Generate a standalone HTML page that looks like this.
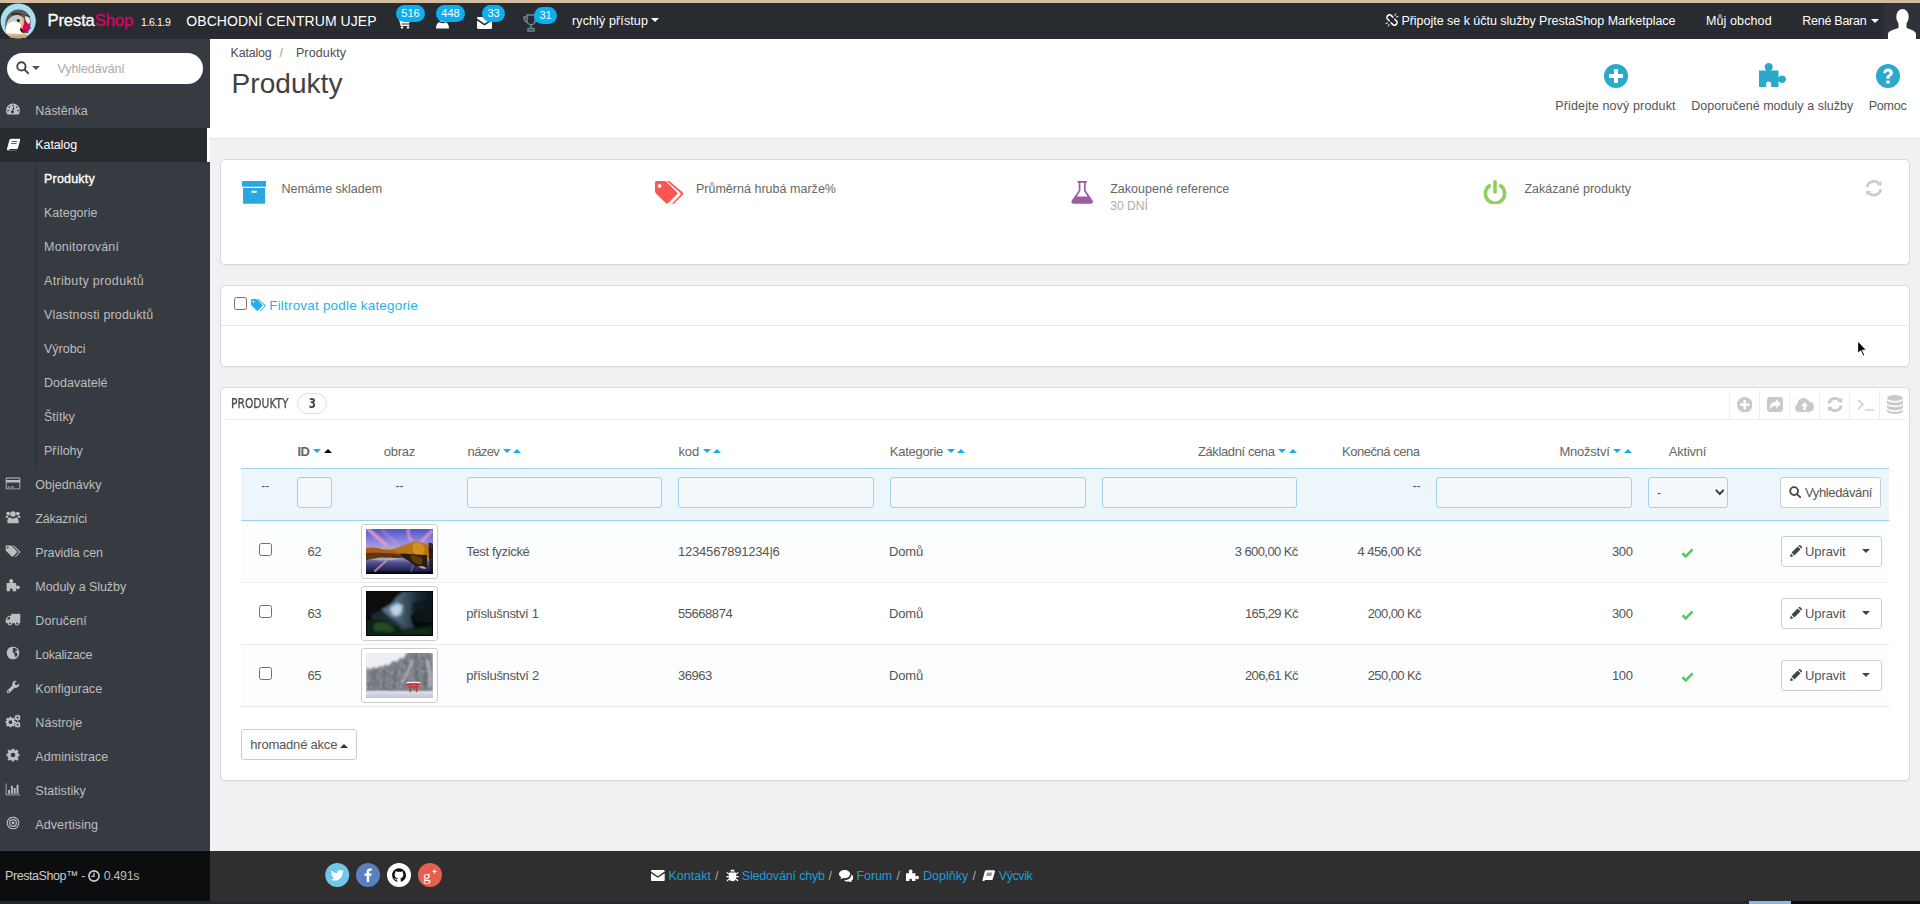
<!DOCTYPE html>
<html lang="cs">
<head>
<meta charset="utf-8">
<title>Produkty • OBCHODNÍ CENTRUM UJEP</title>
<style>
*{box-sizing:border-box;margin:0;padding:0}
html,body{width:1920px;height:904px;overflow:hidden}
body{position:relative;background:#eff1f2;font-family:"Liberation Sans",sans-serif;font-size:12px;color:#555;line-height:1.42857}
a{text-decoration:none;color:inherit}
.abs{position:absolute}
.t{position:absolute;white-space:nowrap;line-height:1}
svg{display:block}
/* chrome strips */
#topstrip{left:0;top:0;width:1920px;height:3px;background:#d3bca0}
#botstrip{left:0;top:901px;width:1920px;height:3px;background:#23262d}
/* header */
#header{left:0;top:3px;width:1920px;height:36px;background:#282b30;color:#fff}
/* sidebar */
#sidebar{left:0;top:39px;width:210px;height:812px;background:#363a41;color:#bebebe}
#sidefoot{left:0;top:851px;width:210px;height:50px;background:#0c0d0e;color:#ccc}
/* page head */
#pagehead{left:210px;top:39px;width:1710px;height:100px;background:#fff;border-bottom:1px solid #e1e3e4}
/* footer */
#footer{left:210px;top:851px;width:1710px;height:50px;background:#2f2f2f;color:#bbb}
.panel{position:absolute;background:#fff;border:1px solid #d6dadd;border-radius:5px;box-shadow:0 1px 0 rgba(0,0,0,.035)}
.badge{height:17px;border-radius:9px;background:#0cb0f0;color:#fff;font-size:11px;line-height:17px;text-align:center}
.caret{width:0;height:0;border-left:4px solid transparent;border-right:4px solid transparent;border-top:4px solid #555}
.mi{position:absolute;left:0;width:210px;height:34px}
.mi.act{width:207px;background:#282b30;color:#fff;box-shadow:3px 0 0 #fff}
.mi .ic{position:absolute;left:5px;top:0;width:16px;height:32px;transform:scale(.94);display:flex;align-items:center;justify-content:center}
.mi .ml{left:35.3px;top:12px;font-size:12.5px}
.mi.act .ml{top:11.4px}
.si{left:44px;font-size:12.5px}
.si.cur{color:#fff;-webkit-text-stroke:.35px #fff}
.cond{font-family:"DejaVu Sans Condensed","Liberation Sans",sans-serif}
.inp{background:#f5f8fa;border:1px solid #a0d0eb;border-radius:3px}
.btn{background:#fff;border:1px solid #cdcdcd;border-radius:3px}
.cb{width:13.200px;height:13px;border:1.500px solid #6f6f6f;border-radius:2.500px;background:#fff}
.thumb{width:77px;height:55px;border:1px solid #ccc;border-radius:3px;background:#fff;padding:4px}
.rt{text-align:right}
</style>
</head>
<body>
<div id="topstrip" class="abs"></div>

<!-- HEADER -->
<div id="header" class="abs">
  <!-- logo -->
  <svg class="abs" style="left:0;top:0" width="38" height="36" viewBox="0 0 38 36">
    <circle cx="18.2" cy="18" r="17.6" fill="#a9deee"/>
    <path d="M5.5 26 C3.5 12 12 6.5 18.5 6.5 C26 6.5 31.5 12 30.5 22 L28 30 L8 30 Z" fill="#5a5853"/>
    <path d="M6 27 C5.5 18 10 12.5 17 12 C21 12 23 14 23.5 17 L22 30 L9 31 Z" fill="#c9c9c7"/>
    <path d="M25 13.5 C28.5 12.5 30.5 16 30 20 L26 22 Z" fill="#e9e7e2"/>
    <path d="M6 30 C5 22 9 18.5 14 18.5 C18 18.5 21 20 21.5 24 L22 31 Z" fill="#fff"/>
    <path d="M11.5 11.5 C14 10.2 18 10.3 21 12" stroke="#2b2a27" stroke-width="1.6" fill="none"/>
    <path d="M26.5 12.6 C28 12.4 29 13 29.6 14" stroke="#2b2a27" stroke-width="1.2" fill="none"/>
    <circle cx="18.3" cy="17.6" r="1.5" fill="#222"/>
    <path d="M22.2 14.5 C23.8 17 23 21 20 25 L21.5 26 C24.6 22 25 17.5 23.8 14.8 Z" fill="#f6b700"/>
    <path d="M20 25 C19.6 27 20.4 28.5 22.5 29.6 L23.2 26.5 Z" fill="#1d1d1b"/>
    <path d="M24.2 15.5 L31.2 25.2 L23.6 29.8 L22 26.3 C24.2 23 24.8 19 24.2 15.5 Z" fill="#df0067"/>
    <path d="M22.6 27.2 L29 26.4 L23.6 29.8 Z" fill="#b5054f"/>
    <path d="M9 31 L27 31 L25.5 35 L11 35 Z" fill="#d9bd8a"/>
    <path d="M10 32.6 L26.3 32.6 L25.5 35 L11 35 Z" fill="#c9a76c"/>
  </svg>
  <span class="t" id="h-presta" style="left:47.5px;top:10.4px;font-size:16.6px;-webkit-text-stroke:.3px currentColor;color:#fff;letter-spacing:-0.123px">Presta<span style="color:#df0067">Shop</span></span>
  <span class="t" id="h-ver" style="left:141.0px;top:14.1px;font-size:10.5px;color:#fff;letter-spacing:-0.359px">1.6.1.9</span>
  <span class="t" id="h-shop" style="left:186.3px;top:11.1px;font-size:14px;color:#fff;letter-spacing:0.061px">OBCHODNÍ CENTRUM UJEP</span>

  <!-- notification icons -->
  <svg class="abs" style="left:397px;top:12px" width="14" height="14" viewBox="0 0 14 14" fill="#fff"><path d="M0 1h2.6l.5 2H13.6l-1.4 5.4H4.4l.3 1.2h7.6v1.4H3.6L1.6 2.4H0z"/><circle cx="5" cy="12.4" r="1.2"/><circle cx="11" cy="12.4" r="1.2"/></svg>
  <span class="abs badge" style="left:396px;top:2px;width:29px">516</span>
  <svg class="abs" style="left:436px;top:12px" width="13" height="14" viewBox="0 0 13 14" fill="#fff"><circle cx="6.5" cy="3.6" r="3.4"/><path d="M0 13.5c0-4 1.6-6 3.6-6.3.8.7 1.8 1 2.9 1s2.100-.3 2.900-1c2 .3 3.600 2.300 3.600 6.300z"/></svg>
  <span class="abs badge" style="left:436px;top:2px;width:29px">448</span>
  <svg class="abs" style="left:476.500px;top:13.500px" width="15" height="12" viewBox="0 0 15 12" fill="#fff"><path d="M0 1.200C0 .5.500 0 1.200 0h12.600c.7 0 1.200.5 1.200 1.200v.4L7.500 6.800 0 1.600z"/><path d="M0 3.400l7.500 5.100L15 3.400v7.400c0 .7-.5 1.200-1.200 1.200H1.200C.5 12 0 11.500 0 10.800z"/></svg>
  <span class="abs badge" style="left:482px;top:2px;width:23px">33</span>
  <svg class="abs" style="left:522.500px;top:11px" width="16" height="18" viewBox="0 0 16 18" fill="none" stroke="#6c8791" stroke-width="1.500"><path d="M4 1h8v5.500c0 2.500-1.800 4.300-4 4.300S4 9 4 6.500z"/><path d="M4 3H1c0 3 1.500 4.800 3.600 5.200M12 3h3c0 3-1.500 4.800-3.600 5.200"/><path d="M8 10.800v3.400M5 17h6v-2.600H5z"/></svg>
  <span class="abs badge" style="left:534px;top:3.700px;width:23px">31</span>
  <span class="t" id="h-quick" style="left:572.0px;top:12.4px;font-size:12.5px;color:#fff;letter-spacing:0.119px">rychlý přístup</span>
  <span class="abs caret" style="left:651px;top:15px;border-top-color:#fff"></span>

  <!-- right side -->
  <svg class="abs" style="left:1385px;top:9.600px;transform:scaleX(-1)" width="14" height="14" viewBox="0 0 14 14" fill="none" stroke="#fff" stroke-width="1.500" stroke-linecap="round"><path d="M6 4.200l1.600-1.600a2.600 2.600 0 0 1 3.700 3.700L9.800 7.800"/><path d="M8 9.800l-1.600 1.600a2.600 2.600 0 0 1-3.700-3.700L4.200 6.200"/><path d="M1 3.500l1.500.5M3.500 1l.5 1.500M13 10.500l-1.500-.5M10.500 13l-.5-1.500" stroke-width="1"/></svg>
  <span class="t" id="h-market" style="left:1401.4px;top:12.4px;font-size:12.5px;color:#fff;letter-spacing:-0.022px">Připojte se k účtu služby PrestaShop Marketplace</span>
  <span class="t" id="h-myshop" style="left:1706.0px;top:12.4px;font-size:12.5px;color:#fff;letter-spacing:0.107px">Můj obchod</span>
  <span class="t" id="h-user" style="left:1802.3px;top:12.4px;font-size:12.5px;color:#fff;letter-spacing:-0.262px">René Baran</span>
  <span class="abs caret" style="left:1871px;top:16px;border-top-color:#fff"></span>
  <div class="abs" style="left:1884px;top:0;width:36px;height:36px;background:#2f3238;overflow:hidden">
    <svg width="36" height="36" viewBox="0 0 36 36" fill="#fff"><ellipse cx="18.500" cy="14" rx="6.200" ry="8"/><path d="M14.500 19h8v6c4 1.500 9 2.500 9.500 6v6h-28v-6c.5-3.500 6.500-4.500 10.500-6z"/></svg>
  </div>
</div>

<!-- SIDEBAR -->
<div id="sidebar" class="abs">
  <div class="abs" id="sb-search" style="left:7px;top:13.5px;width:196px;height:31.5px;border-radius:16px;background:#fff">
    <svg class="abs" style="left:8.5px;top:8.8px" width="13.5" height="13.5" viewBox="0 0 14 14" fill="none" stroke="#444" stroke-width="2"><circle cx="5.600" cy="5.600" r="4.300"/><path d="M8.800 8.800l4 4" stroke-linecap="round"/></svg>
    <span class="abs caret" style="left:25px;top:13.5px;border-top-color:#555"></span>
    <span class="t" id="sb-ph" style="left:50.5px;top:10.4px;font-size:12.5px;color:#aaa;letter-spacing:-0.104px">Vyhledávání</span>
  </div>
  <div class="mi" style="top:54px"><span class="ic"><svg width="16" height="14" viewBox="0 0 16 14"><path fill="currentColor" fill-rule="evenodd" d="M8 1.200a7.300 7.300 0 0 1 7.300 7.300c0 1.500-.4 2.800-1.100 3.900-.15.250-.4.400-.7.400H2.500c-.3 0-.55-.15-.7-.4A7.300 7.300 0 0 1 8 1.200zM8 2.400a.9.900 0 1 0 0 1.800.9.900 0 0 0 0-1.800zM4.100 4a.9.900 0 1 0 0 1.800.9.900 0 0 0 0-1.800zM11.900 4a.9.900 0 1 0 0 1.800.9.900 0 0 0 0-1.800zM2.700 7.700a.9.900 0 1 0 0 1.800.9.900 0 0 0 0-1.800zM13.300 7.700a.9.900 0 1 0 0 1.800.9.900 0 0 0 0-1.800zM9.300 5.300l-.9 3.500a1.600 1.600 0 1 1-1.100-.3l.9-3.500z"/></svg></span><a class="t ml" id="m0" style="letter-spacing:-0.052px">Nástěnka</a></div>
  <div class="mi act" style="top:88.5px"><span class="ic"><svg width="15" height="13" viewBox="0 0 15 13"><path fill="currentColor" fill-rule="evenodd" d="M4.800.3h9c.7 0 1.100.6.900 1.300l-2.400 8.600c-.2.700-.8 1.200-1.500 1.200H3.200l-.3 1h8.400l-.3.500H1.700c-.8 0-1.300-.7-1.100-1.500L3 2.200C3.300 1.100 4 .3 4.800.3zM5.600 3l-.25.900h6l.25-.9zM5 5.200l-.25.900h6l.25-.9z"/></svg></span><a class="t ml" id="m1" style="letter-spacing:-0.101px">Katalog</a></div>
  <div class="mi" style="top:428px"><span class="ic"><svg width="16" height="13" viewBox="0 0 16 13"><path fill="currentColor" fill-rule="evenodd" d="M1.300 0h13.400c.7 0 1.300.6 1.300 1.300v10.400c0 .7-.6 1.300-1.300 1.300H1.300C.6 13 0 12.400 0 11.700V1.300C0 .6.600 0 1.300 0zM1.200 1.200v1.600h13.600V1.200zM1.200 5.600v6.200h13.600V5.600zM2.400 9.600h2.200v1.100H2.400zM5.600 9.600h3.300v1.100H5.600z"/></svg></span><a class="t ml" id="m2" style="letter-spacing:0.028px">Objednávky</a></div>
  <div class="mi" style="top:462px"><span class="ic"><svg width="16" height="14" viewBox="0 0 16 14" fill="currentColor"><circle cx="8" cy="3.800" r="2.900"/><circle cx="2.900" cy="3.300" r="2"/><circle cx="13.100" cy="3.300" r="2"/><path d="M3.500 14c-1 0-1.500-.6-1.500-1.500 0-2.800.7-5.200 2.700-5.300.9.800 2 1.300 3.300 1.300s2.400-.5 3.300-1.300c2 .1 2.700 2.500 2.700 5.300 0 .9-.5 1.500-1.500 1.500z"/><path d="M0 7.200C0 6 .5 5.400 1.500 5.600c.5.300 1.200.4 1.900.3-.6.500-1.100 1.300-1.400 2.200H.9C.3 8.100 0 7.800 0 7.200zM16 7.200c0-1.200-.5-1.800-1.500-1.600-.5.300-1.200.4-1.900.3.600.5 1.100 1.300 1.400 2.200h1.100c.6 0 .9-.3.900-.9z"/></svg></span><a class="t ml" id="m3" style="letter-spacing:-0.211px">Zákazníci</a></div>
  <div class="mi" style="top:496px"><span class="ic"><svg width="16" height="13" viewBox="0 0 16 13"><path fill="currentColor" fill-rule="evenodd" d="M0 .8C0 .4.400 0 .8 0h4.400c.5 0 1 .2 1.400.6l5.600 5.600c.4.400.4 1 0 1.400l-4.200 4.200c-.4.400-1 .4-1.400 0L1 6.200C.4 5.600 0 5.100 0 4.600zM2.400 1.400a1 1 0 1 0 0 2 1 1 0 0 0 0-2z"/><path fill="currentColor" d="M8.600 0l6.800 6.200c.5.400.5 1.200 0 1.600l-4.200 4.200c-.3.300-.8.400-1.200.2l4-4.400c.4-.4.400-1 0-1.400L7.200 0z"/></svg></span><a class="t ml" id="m4" style="letter-spacing:-0.1px">Pravidla cen</a></div>
  <div class="mi" style="top:530px"><span class="ic"><svg width="15" height="14" viewBox="0 0 15 14"><path fill="currentColor" d="M0 4.800h3.800C3.300 4.100 3 3.500 3 2.700 3 1.500 3.900.6 5.100.6S7.200 1.500 7.200 2.700c0 .8-.3 1.400-.8 2.100h4v3.500c.5-.5 1.100-.9 1.900-.9 1.100 0 2 .9 2 2s-.9 2-2 2c-.8 0-1.400-.4-1.900-.9V14H6.600v-1.800c0-1-.6-1.400-1.400-1.400s-1.400.4-1.400 1.400V14H0z"/></svg></span><a class="t ml" id="m5" style="letter-spacing:-0.061px">Moduly a Služby</a></div>
  <div class="mi" style="top:564px"><span class="ic"><svg width="16" height="13" viewBox="0 0 16 13"><path fill="currentColor" fill-rule="evenodd" d="M6 .5h9.200c.4 0 .8.400.8.800v8.400c0 .4-.4.800-.8.800h-.9a2.100 2.100 0 1 1-4.100 0H6.800a2.100 2.100 0 1 1-4.100 0H.8C.4 10.500 0 10.100 0 9.700V6.800c0-.4.100-.8.400-1.100L2.700 3c.3-.3.700-.5 1.100-.5H6zM1.200 6.500h3.600V3.700H4c-.2 0-.3.100-.4.200L1.300 6.200z"/><circle cx="4.750" cy="10.800" r="1.050" fill="#363a41"/><circle cx="12.250" cy="10.800" r="1.050" fill="#363a41"/></svg></span><a class="t ml" id="m6" style="letter-spacing:0.11px">Doručení</a></div>
  <div class="mi" style="top:598px"><span class="ic"><svg width="14" height="14" viewBox="0 0 14 14"><circle cx="7" cy="7" r="6.800" fill="currentColor"/><path fill="#363a41" d="M7.600 1.300c1.800.2 3.300 1.200 4.200 2.700l-1 .8-.9-.3-.6.800.3 1 1.300.4.900 1.600-.5 1.800-1.600 1.600-.4-1.600-.9-1.200.2-1.300-1.300-1-.9-1.700.8-1.300L6.500 2.300z"/><path fill="#363a41" d="M3 4.200l1.200 1.300.2 1.500 1.400 1 .3 1.700-1 1.800C3.100 10.500 1.900 8.800 1.900 7c0-1 .4-2 1.100-2.800z" opacity=".0"/></svg></span><a class="t ml" id="m7" style="letter-spacing:-0.218px">Lokalizace</a></div>
  <div class="mi" style="top:632px"><span class="ic"><svg width="14" height="14" viewBox="0 0 14 14"><path fill="currentColor" fill-rule="evenodd" d="M13.700 3c.3 1.400-.1 2.800-1.100 3.800s-2.500 1.400-3.900 1L3.400 13.200c-.7.700-1.800.7-2.500 0s-.7-1.800 0-2.500l5.400-5.400c-.4-1.400 0-2.800 1-3.900S9.700 0 11.100.3L8.800 2.700l.5 2 2 .5zM2.200 11.100a.7.700 0 1 0 0 1.400.7.700 0 0 0 0-1.400z"/></svg></span><a class="t ml" id="m8" style="letter-spacing:0.007px">Konfigurace</a></div>
  <div class="mi" style="top:666px"><span class="ic"><svg width="16" height="14" viewBox="0 0 16 14"><g fill="currentColor"><path fill-rule="evenodd" d="M4.300 2.500h2l.3 1.300.8.400 1.200-.7 1.400 1.400-.7 1.200.4.800 1.300.3v2l-1.300.3-.4.800.7 1.200-1.400 1.400-1.200-.7-.8.400-.3 1.300h-2L4 12.600l-.8-.4-1.200.7L.6 11.500l.7-1.200-.4-.8L-.4 9.200v-2L.9 6.900l.4-.8-.7-1.200L2 3.500l1.200.7.800-.4zM5.300 6.200a2 2 0 1 0 0 4 2 2 0 0 0 0-4z"/><path fill-rule="evenodd" d="M12.300 0h1.200l.2.800.5.200.7-.4.800.8-.4.700.2.500.8.200v1.200l-.8.200-.2.500.4.700-.8.800-.7-.4-.5.200-.2.800h-1.200l-.2-.8-.5-.2-.7.400-.8-.8.400-.7-.2-.5-.8-.2V2.800l.8-.2.200-.5-.4-.7.800-.8.700.4.500-.2zM12.900 2.300a1.100 1.100 0 1 0 0 2.200 1.100 1.100 0 0 0 0-2.200z"/><path fill-rule="evenodd" d="M12.300 7.600h1.200l.2.800.5.200.7-.4.800.8-.4.700.2.500.8.200v1.200l-.8.200-.2.500.4.700-.8.800-.7-.4-.5.200-.2.800h-1.200l-.2-.8-.5-.2-.7.400-.8-.8.400-.7-.2-.5-.8-.2v-1.200l.8-.2.200-.5-.4-.7.800-.8.700.4.500-.2zM12.900 9.900a1.100 1.100 0 1 0 0 2.200 1.100 1.100 0 0 0 0-2.200z"/></g></svg></span><a class="t ml" id="m9" style="letter-spacing:0.069px">Nástroje</a></div>
  <div class="mi" style="top:700px"><span class="ic"><svg width="14" height="14" viewBox="0 0 14 14"><path fill="currentColor" fill-rule="evenodd" d="M5.800 0h2.400l.4 1.800 1 .4 1.600-1 1.700 1.700-1 1.600.4 1 1.800.4v2.400l-1.800.4-.4 1 1 1.600-1.700 1.700-1.600-1-1 .4-.4 1.800H5.800l-.4-1.800-1-.4-1.600 1-1.700-1.700 1-1.600-.4-1L-.1 8.200V5.800l1.800-.4.4-1-1-1.600L2.800 1.100l1.600 1 1-.4zM7 4.500a2.500 2.500 0 1 0 0 5 2.500 2.500 0 0 0 0-5z"/></svg></span><a class="t ml" id="m10" style="letter-spacing:0.071px">Administrace</a></div>
  <div class="mi" style="top:734px"><span class="ic"><svg width="16" height="13" viewBox="0 0 16 13"><path fill="currentColor" d="M0 0h1.100v11.900H16V13H0zM2.800 7h2v4h-2zM5.800 2.500h2V11h-2zM8.800 5h2v6h-2zM11.800 1.500h2V11h-2z"/></svg></span><a class="t ml" id="m11" style="letter-spacing:0.058px">Statistiky</a></div>
  <div class="mi" style="top:768px"><span class="ic"><svg width="14" height="14" viewBox="0 0 14 14"><g fill="none" stroke="currentColor"><circle cx="7" cy="7" r="6.200" stroke-width="1.300"/><circle cx="7" cy="7" r="3.600" stroke-width="1.300"/></g><circle cx="7" cy="7" r="1.500" fill="currentColor"/></svg></span><a class="t ml" id="m12" style="letter-spacing:0.087px">Advertising</a></div>
  <div class="abs" style="left:35px;top:123px;width:1px;height:306px;background:#2a2d33"></div>
  <a class="t si cur" id="s0" style="top:134px;letter-spacing:0.196px">Produkty</a>
  <a class="t si" id="s1" style="top:168px;letter-spacing:-0.013px">Kategorie</a>
  <a class="t si" id="s2" style="top:202px;letter-spacing:0.253px">Monitorování</a>
  <a class="t si" id="s3" style="top:236px;letter-spacing:0.329px">Atributy produktů</a>
  <a class="t si" id="s4" style="top:270px;letter-spacing:0.157px">Vlastnosti produktů</a>
  <a class="t si" id="s5" style="top:304px;letter-spacing:-0.012px">Výrobci</a>
  <a class="t si" id="s6" style="top:338px;letter-spacing:0.025px">Dodavatelé</a>
  <a class="t si" id="s7" style="top:372px;letter-spacing:-0.095px">Štítky</a>
  <a class="t si" id="s8" style="top:406px;letter-spacing:-0.029px">Přílohy</a>
</div>
<div id="sidefoot" class="abs">
  <span class="t" id="sf1" style="left:5.0px;top:19.42px;font-size:12.5px;color:#ccc;letter-spacing:-0.42px">PrestaShop™ -</span>
  <svg class="abs" style="left:88px;top:19px" width="12" height="12" viewBox="0 0 12 12" fill="none" stroke="#ccc" stroke-width="1.600"><circle cx="6" cy="6" r="5.100"/><path d="M6 2.800V6.300H3.400" stroke-width="1.300"/></svg>
  <span class="t" id="sf2" style="left:103.76px;top:19.42px;font-size:12.5px;color:#bbb;letter-spacing:-0.339px">0.491s</span>
</div>

<!-- PAGE HEAD -->
<div id="pagehead" class="abs">
  <span class="t" id="bc1" style="left:20.61px;top:8.22px;font-size:12.5px;color:#4e4e4e;letter-spacing:-0.215px">Katalog</span>
  <span class="t" id="bc2" style="left:69.600px;top:8.22px;font-size:12.5px;color:#9aa84a">/</span>
  <span class="t" id="bc3" style="left:85.91px;top:8.22px;font-size:12.5px;color:#4e4e4e;letter-spacing:0.126px">Produkty</span>
  <span class="t" id="title" style="left:21.61px;top:31.2px;font-size:28px;color:#414141;letter-spacing:0.049px">Produkty</span>
  <!-- toolbar -->
  <svg class="abs" style="left:1394.2px;top:25px" width="24" height="24" viewBox="0 0 24 24"><circle cx="12" cy="12" r="12" fill="#2ba9cd"/><path d="M10 5h4v5h5v4h-5v5h-4v-5H5v-4h5z" fill="#fff"/></svg>
  <span class="t" id="tb1" style="left:1345.3px;top:60.9px;font-size:12.5px;color:#555;letter-spacing:0.141px">Přidejte nový produkt</span>
  <svg class="abs" style="left:1548.5px;top:22.5px" width="27.500" height="25.500" viewBox="0 0 27.500 25.500"><path fill="#2ba9cd" d="M0 8.500h7.200C6.300 7.300 5.700 6.300 5.700 4.800 5.700 2.600 7.500.900 9.700.900s4 1.700 4 3.900c0 1.500-.6 2.500-1.500 3.700h7.300v6.600c.9-.9 2-1.700 3.600-1.700 2.100 0 3.900 1.700 3.900 3.800s-1.800 3.800-3.900 3.800c-1.600 0-2.700-.8-3.600-1.700v6.200h-7.300v-3.400c0-1.800-1.100-2.600-2.500-2.600s-2.500.8-2.500 2.600v3.400H0z"/></svg>
  <span class="t" id="tb2" style="left:1481.21px;top:60.9px;font-size:12.5px;color:#555;letter-spacing:0.034px">Doporučené moduly a služby</span>
  <svg class="abs" style="left:1666px;top:25px" width="24" height="24" viewBox="0 0 24 24"><circle cx="12" cy="12" r="12" fill="#2ba9cd"/><path fill="#fff" d="M7.300 9.200C7.300 6.300 9.400 4.600 12.100 4.600c2.800 0 4.800 1.700 4.800 4.100 0 1.800-.9 2.700-2.100 3.500-1 .7-1.300 1.100-1.300 2v.6h-3.100v-.9c0-1.500.6-2.400 1.800-3.200.9-.6 1.400-1 1.400-1.800 0-.9-.7-1.500-1.700-1.500-1.100 0-1.800.7-1.900 1.800zM10.300 16.500h3.300v3.100h-3.300z"/></svg>
  <span class="t" id="tb3" style="left:1658.71px;top:60.9px;font-size:12.5px;color:#555;letter-spacing:-0.202px">Pomoc</span>
</div>

<!-- KPI PANEL -->
<div id="kpi" class="panel" style="left:220px;top:159px;width:1690px;height:106px">
  <svg class="abs" style="left:21.1px;top:21.2px" width="24.200" height="22.800" viewBox="0 0 24.200 22.800"><path fill="#2ba6e1" fill-rule="evenodd" d="M.5 0h23.200c.3 0 .5.200.5.500v4.700c0 .3-.2.500-.5.500H.5C.200 5.700 0 5.500 0 5.200V.5C0 .2.200 0 .5 0zM1 6.900h22.200v15.400c0 .3-.2.500-.5.500H1.500c-.3 0-.5-.2-.5-.5zM9.900 9.700c-.3 0-.5.200-.5.500v1.100c0 .3.200.5.500.5h4.400c.3 0 .5-.2.500-.5v-1.100c0-.3-.2-.5-.5-.5z"/></svg>
  <span class="t" id="k1" style="left:60.5px;top:22.52px;font-size:12.5px;color:#666;letter-spacing:-0.01px">Nemáme skladem</span>

  <svg class="abs" style="left:433.7px;top:21.2px" width="28.700" height="22.800" viewBox="0 0 28.700 22.800"><path fill="#ff5450" fill-rule="evenodd" d="M0 1.5C0 .7.7 0 1.5 0h7.700c.9 0 1.800.4 2.400 1l10.100 10.100c.7.7.7 1.800 0 2.500l-8.500 8.500c-.7.7-1.800.7-2.500 0L1 12.400c-.6-.6-1-1.500-1-2.400zM4.600 2.900a1.900 1.900 0 1 0 0 3.800 1.900 1.900 0 0 0 0-3.800z"/><path fill="#ff5450" d="M14.300 0l13.200 11.200c.8.700.9 1.900.1 2.700l-8.400 8.400c-.6.600-1.500.7-2.200.3l8.100-8.300c.7-.8.700-2-.1-2.700L11.800 0z"/></svg>
  <span class="t" id="k2" style="left:474.91px;top:22.52px;font-size:12.5px;color:#666;letter-spacing:0.021px">Průměrná hrubá marže%</span>

  <svg class="abs" style="left:850.2px;top:21.2px" width="22.400" height="22.800" viewBox="0 0 22.400 22.800"><path fill="#9e5ba1" d="M6.500 0h9.400v1.700h-1.200v7.800l6.900 10c1 1.600 0 3.300-2 3.300H2.800c-2 0-3-1.700-2-3.300l6.900-10V1.700H6.500zM9.400 1.700v8.300l-3.600 5.400h10.800L13 10V1.700z"/></svg>
  <span class="t" id="k3" style="left:889.21px;top:22.52px;font-size:12.5px;color:#666;letter-spacing:0.014px">Zakoupené reference</span>
  <span class="t" id="k3b" style="left:889.21px;top:39.5px;font-size:12px;color:#aaa;letter-spacing:0.041px">30 DNÍ</span>

  <svg class="abs" style="left:1262px;top:19.6px" width="24" height="24.600" viewBox="0 0 24 24.600" fill="none" stroke="#8fce5f" stroke-width="3.600" stroke-linecap="round"><path d="M12 1.800v10.200"/><path d="M6.400 5.800a9.600 9.600 0 1 0 11.200 0"/></svg>
  <span class="t" id="k4" style="left:1303.41px;top:22.52px;font-size:12.5px;color:#666;letter-spacing:0.016px">Zakázané produkty</span>

  <svg class="abs" style="left:1644.2px;top:20.3px" width="17.800" height="16.600" viewBox="0 0 17.800 16.600" fill="none" stroke="#c9cdd0" stroke-width="2.800"><path d="M2 7.300A7 7 0 0 1 14.300 4"/><path d="M15.800 9.300A7 7 0 0 1 3.500 12.600"/><path d="M16.600.8v4.800h-4.800z" fill="#c9cdd0" stroke="none"/><path d="M1.200 15.800v-4.800h4.800z" fill="#c9cdd0" stroke="none"/></svg>
</div>

<!-- FILTER PANEL -->
<div id="filter" class="panel" style="left:220px;top:285px;width:1690px;height:82px">
  <span class="abs" style="left:13.3px;top:11px;width:13px;height:13px;border:1.500px solid #6f6f6f;border-radius:2.500px;background:#fff"></span>
  <svg class="abs" style="left:29.8px;top:13.4px" width="15" height="12" viewBox="0 0 28.700 22.800"><path fill="#1fb3ef" fill-rule="evenodd" d="M0 1.5C0 .7.7 0 1.5 0h7.700c.9 0 1.800.4 2.400 1l10.100 10.100c.7.7.7 1.800 0 2.500l-8.500 8.500c-.7.7-1.800.7-2.500 0L1 12.400c-.6-.6-1-1.500-1-2.400zM4.600 2.900a1.900 1.900 0 1 0 0 3.800 1.900 1.900 0 0 0 0-3.800z"/><path fill="#1fb3ef" d="M14.300 0l13.200 11.200c.8.700.9 1.900.1 2.700l-8.400 8.400c-.6.600-1.500.7-2.200.3l8.100-8.300c.7-.8.700-2-.1-2.700L11.800 0z"/></svg>
  <span class="t" id="f1" style="left:48.26px;top:12.700px;font-size:13.500px;color:#1fb3ef;letter-spacing:0.187px">Filtrovat podle kategorie</span>
  <div class="abs" style="left:0;top:38.500px;width:1687px;height:1px;background:#e6e8ea"></div>
</div>

<!-- TABLE PANEL -->
<div id="list" class="panel" style="left:220px;top:387px;width:1690px;height:394px">
  <span class="t cond" id="lh" style="left:9.5px;top:8.2px;font-size:14px;color:#4a4a4a;-webkit-text-stroke:.25px #4a4a4a;transform:scaleX(.85);transform-origin:0 50%">PRODUKTY</span>
  <span class="abs cond" id="lhb" style="left:76px;top:5px;width:30px;height:21px;border:1px solid #ddd;border-radius:11px;background:#fff;color:#444;font-size:14px;font-weight:bold;line-height:19px;text-align:center"><span style="display:inline-block;transform:scaleX(.82)">3</span></span>
  <div class="abs" style="left:4px;top:31px;width:1680px;height:1px;background:#eee"></div>
  <div class="abs" style="left:1508px;top:2px;width:1px;height:29px;background:#eee"></div>
  <div class="abs" style="left:1538px;top:2px;width:1px;height:29px;background:#eee"></div>
  <div class="abs" style="left:1568px;top:2px;width:1px;height:29px;background:#eee"></div>
  <div class="abs" style="left:1598px;top:2px;width:1px;height:29px;background:#eee"></div>
  <div class="abs" style="left:1628px;top:2px;width:1px;height:29px;background:#eee"></div>
  <div class="abs" style="left:1658px;top:2px;width:1px;height:29px;background:#eee"></div>
  <span class="abs" style="left:1515.95px;top:8.75px"><svg width="15.5" height="15.5" viewBox="0 0 16 16"><circle cx="8" cy="8" r="8" fill="#c9c9c9"/><path d="M6.700 3.200h2.600v3.500h3.500v2.600H9.300v3.500H6.700V9.300H3.200V6.700h3.500z" fill="#fff"/></svg></span>
  <span class="abs" style="left:1546.0px;top:9.0px"><svg width="16" height="15" viewBox="0 0 16 15"><path fill="#c9c9c9" fill-rule="evenodd" d="M3 0h10c1.700 0 3 1.300 3 3v9c0 1.700-1.300 3-3 3H3c-1.700 0-3-1.300-3-3V3c0-1.700 1.300-3 3-3zM9.200 2.400v2.300c-3.600.1-6 2-6 5.600 0 .9.200 1.600.5 2.300.4-2.200 2.200-3.700 5.500-3.800v2.400l4.600-4.400z"/></svg></span>
  <span class="abs" style="left:1574.0px;top:9.5px"><svg width="19" height="14" viewBox="0 0 19 14"><path fill="#c9c9c9" fill-rule="evenodd" d="M4.200 14C1.900 14 0 12.200 0 9.900c0-1.700 1-3.100 2.500-3.700C2.500 2.700 5.200 0 8.600 0c2.500 0 4.700 1.500 5.600 3.700 2.700.1 4.800 2.300 4.800 5.100 0 2.900-2.300 5.200-5.200 5.200zM9.500 4.200L5.800 8.100h2.400V12h2.600V8.100h2.400z"/></svg></span>
  <span class="abs" style="left:1606.0px;top:9.0px"><svg width="16" height="15" viewBox="0 0 17.800 16.600" fill="none" stroke="#c9c9c9" stroke-width="3.100"><path d="M2 7.300A7 7 0 0 1 14.300 4"/><path d="M15.800 9.300A7 7 0 0 1 3.500 12.600"/><path d="M16.800.4v5.400h-5.400z" fill="#c9c9c9" stroke="none"/><path d="M1 16.200v-5.400h5.400z" fill="#c9c9c9" stroke="none"/></svg></span>
  <span class="abs" style="left:1635.5px;top:10.5px"><svg width="17" height="12" viewBox="0 0 17 12" fill="none" stroke="#c9c9c9" stroke-width="1.300"><path d="M1 1l5 4.500L1 10"/><path d="M8 11h9"/></svg></span>
  <span class="abs" style="left:1666.0px;top:7.0px"><svg width="16" height="19" viewBox="0 0 16 19" fill="#c9c9c9"><ellipse cx="8" cy="3" rx="8" ry="3"/><path d="M0 5.200c1 1.500 4.200 2.400 8 2.400s7-.9 8-2.400v2.400c0 1.700-3.600 3-8 3s-8-1.300-8-3zM0 9.800c1 1.500 4.200 2.400 8 2.400s7-.9 8-2.400v2.400c0 1.700-3.600 3-8 3s-8-1.300-8-3zM0 14.400c1 1.500 4.200 2.400 8 2.400s7-.9 8-2.400V16c0 1.700-3.600 3-8 3s-8-1.300-8-3z"/></svg></span>
  <span class="t" id="th-id" style="left:76.5px;top:57.25px;font-size:13px;color:#656565;font-weight:bold;letter-spacing:-0.625px">ID</span>
  <span class="abs" style="left:92px;top:61.3px;width:0;height:0;border-left:4.2px solid transparent;border-right:4.2px solid transparent;border-top:4.500px solid #0cb0f0"></span>
  <span class="abs" style="left:102.75px;top:61.3px;width:0;height:0;border-left:4.2px solid transparent;border-right:4.2px solid transparent;border-bottom:4.500px solid #000"></span>
  <span class="t" id="th-img" style="left:162.75px;top:57.25px;font-size:13px;color:#656565;letter-spacing:-0.256px">obraz</span>
  <span class="t" id="th-name" style="left:246.5px;top:57.25px;font-size:13px;color:#656565;letter-spacing:-0.591px">název</span>
  <span class="abs" style="left:281.5px;top:61.3px;width:0;height:0;border-left:4.2px solid transparent;border-right:4.2px solid transparent;border-top:4.500px solid #0cb0f0"></span>
  <span class="abs" style="left:292.25px;top:61.3px;width:0;height:0;border-left:4.2px solid transparent;border-right:4.2px solid transparent;border-bottom:4.500px solid #0cb0f0"></span>
  <span class="t" id="th-ref" style="left:457.41px;top:57.25px;font-size:13px;color:#656565;letter-spacing:-0.123px">kod</span>
  <span class="abs" style="left:481.6px;top:61.3px;width:0;height:0;border-left:4.2px solid transparent;border-right:4.2px solid transparent;border-top:4.500px solid #0cb0f0"></span>
  <span class="abs" style="left:492.35px;top:61.3px;width:0;height:0;border-left:4.2px solid transparent;border-right:4.2px solid transparent;border-bottom:4.500px solid #0cb0f0"></span>
  <span class="t" id="th-cat" style="left:668.8px;top:57.25px;font-size:13px;color:#656565;letter-spacing:-0.273px">Kategorie</span>
  <span class="abs" style="left:725.7px;top:61.3px;width:0;height:0;border-left:4.2px solid transparent;border-right:4.2px solid transparent;border-top:4.500px solid #0cb0f0"></span>
  <span class="abs" style="left:736.45px;top:61.3px;width:0;height:0;border-left:4.2px solid transparent;border-right:4.2px solid transparent;border-bottom:4.500px solid #0cb0f0"></span>
  <span class="t" id="th-price" style="left:977.0px;top:57.25px;font-size:13px;color:#656565;letter-spacing:-0.398px">Základní cena</span>
  <span class="abs" style="left:1057px;top:61.3px;width:0;height:0;border-left:4.2px solid transparent;border-right:4.2px solid transparent;border-top:4.500px solid #0cb0f0"></span>
  <span class="abs" style="left:1067.75px;top:61.3px;width:0;height:0;border-left:4.2px solid transparent;border-right:4.2px solid transparent;border-bottom:4.500px solid #0cb0f0"></span>
  <span class="t" id="th-final" style="left:1121.0px;top:57.25px;font-size:13px;color:#656565;letter-spacing:-0.46px">Konečná cena</span>
  <span class="t" id="th-qty" style="left:1338.5px;top:57.25px;font-size:13px;color:#656565;letter-spacing:-0.252px">Množství</span>
  <span class="abs" style="left:1392px;top:61.3px;width:0;height:0;border-left:4.2px solid transparent;border-right:4.2px solid transparent;border-top:4.500px solid #0cb0f0"></span>
  <span class="abs" style="left:1402.75px;top:61.3px;width:0;height:0;border-left:4.2px solid transparent;border-right:4.2px solid transparent;border-bottom:4.500px solid #0cb0f0"></span>
  <span class="t" id="th-act" style="left:1447.75px;top:57.25px;font-size:13px;color:#656565;letter-spacing:-0.217px">Aktivní</span>
  <div class="abs" style="left:20px;top:80px;width:1648px;height:53px;background:#ecf6fb;border-top:1px solid #a0d0eb;border-bottom:1px solid #a0d0eb"></div>
  <span class="t" style="left:40.25px;top:92px;font-size:12px;color:#555">--</span>
  <span class="t" style="left:174.5px;top:92px;font-size:12px;color:#555">--</span>
  <span class="t" style="left:1191.4px;top:92px;font-size:12px;color:#555">--</span>
  <span class="abs inp" style="left:76px;top:89px;width:35px;height:31px"></span>
  <span class="abs inp" style="left:246px;top:89px;width:195px;height:31px"></span>
  <span class="abs inp" style="left:457px;top:89px;width:196px;height:31px"></span>
  <span class="abs inp" style="left:669px;top:89px;width:196px;height:31px"></span>
  <span class="abs inp" style="left:881px;top:89px;width:195px;height:31px"></span>
  <span class="abs inp" style="left:1215px;top:89px;width:196px;height:31px"></span>
  <span class="abs inp" style="left:1427px;top:89px;width:80px;height:31px"></span>
  <span class="t" style="left:1436px;top:98.5px;font-size:12px;color:#555">-</span>
  <svg class="abs" style="left:1493.5px;top:101px" width="9.500" height="6.500" viewBox="0 0 9.500 6.500" fill="none" stroke="#333" stroke-width="1.800"><path d="M.8.900l3.950 4 3.950-4"/></svg>
  <span class="abs btn" style="left:1559px;top:89px;width:101px;height:31px"></span>
  <svg class="abs" style="left:1567.7px;top:97.7px" width="12.800" height="12.800" viewBox="0 0 14 14" fill="none" stroke="#444" stroke-width="2"><circle cx="5.600" cy="5.600" r="4.300"/><path d="M8.800 8.800l4 4" stroke-linecap="round"/></svg>
  <span class="t" id="btn-s" style="left:1584.0px;top:98px;font-size:13px;color:#555;letter-spacing:-0.371px">Vyhledávání</span>
  <div class="abs" style="left:20px;top:133px;width:1648px;height:62px;background:#fcfdfe;border-bottom:1px solid #eaedef"></div>
  <span class="abs cb" style="left:37.8px;top:155px"></span>
  <span class="t" id="r0id" style="left:86.5px;top:157.25px;font-size:13px;letter-spacing:-0.359px">62</span>
  <span class="abs thumb" style="left:140px;top:136px"><svg width="67" height="45" viewBox="0 0 67 45"><defs><linearGradient id="a1" x1="0" y1="0" x2="0" y2="1"><stop offset="0" stop-color="#4f55c4"/><stop offset=".55" stop-color="#8a84dc"/><stop offset="1" stop-color="#b5a6e2"/></linearGradient><linearGradient id="a2" x1="0" y1="0" x2="0" y2="1"><stop offset="0" stop-color="#9a9cca"/><stop offset=".3" stop-color="#4d4f8e"/><stop offset=".75" stop-color="#23244e"/><stop offset="1" stop-color="#05050c"/></linearGradient><filter id="b1" x="-10%" y="-10%" width="120%" height="120%"><feGaussianBlur stdDeviation=".7"/></filter><filter id="b1s" x="-10%" y="-10%" width="120%" height="120%"><feGaussianBlur stdDeviation="1.1"/></filter><clipPath id="c1"><rect width="67" height="45"/></clipPath></defs><g clip-path="url(#c1)"><rect width="67" height="21" fill="url(#a1)"/><g filter="url(#b1s)" stroke="#f0a2c2" stroke-linecap="round" fill="none"><path d="M2 0L20 16" stroke-width="3"/><path d="M16 1l14 13" stroke-width="1.600" opacity=".55"/><path d="M42.500 0c-1 4 0 8 3 12" stroke-width="2.400" opacity=".85"/><path d="M66 2L55 13" stroke-width="2.600" opacity=".9"/></g><rect y="19" width="67" height="12" fill="#7a4a18"/><rect y="29" width="67" height="16" fill="url(#a2)"/><g filter="url(#b1)"><path d="M12 20l5-2.500 4 1 4-2 4 1.500 4-1 3 2v4H12z" fill="#a9a9bb"/><path d="M0 19c4-1 9-.5 13 .5 4 1 8 1.500 13 1 3-1 6-1.500 9-1v6H0z" fill="#b05c18"/><path d="M26 21c3-1 5-3 8-3 3-3 7-2 10-4 4-2 9-1.500 12 0 3 0 5 1 7 3v13c-5 1-10 0-14-2-4-3-8-4-12-4-4 0-8-1-11-3z" fill="#b8731a"/><path d="M48 14c4-1 8 0 10 3 1 3 0 7-2 10-3 1-6 0-8-3-2-4-2-8 0-10z" fill="#d49a22" opacity=".8"/><path d="M62.500 14c2-.5 3.500 0 4.500 1v29h-2c-1.500-8-2.500-18-2.500-30z" fill="#15100e" opacity=".8"/><path d="M0 24c8-.5 18 0 26 .5 4 0 8 1 10 2l-2 2c-3 1-6 .5-9 1.500-8 1-16 1.500-25 1z" fill="#573817"/><path d="M34 25c8 0 18 .5 27 1v12c-4 0-7-1-9 0-4-1-6-4-9-6-3-2-7-3-9-7z" fill="#2a1a10"/><path d="M44 26c4 0 9 1 12 3 1 3 0 6-2 7-4-1-7-3-8-5z" fill="#6e3e14" opacity=".8"/><path d="M2 30.500c3-1 6-.5 9-1.500 4-1 8 0 12-.5 4 .5 7 0 10 1.500-10 1.500-20 1.500-31 .5z" fill="#c9c6d8" opacity=".75"/><path d="M9 42L20 32" stroke="#e79ab0" stroke-width="2.200" opacity=".7" stroke-linecap="round"/><path d="M45 43l2-7" stroke="#8f86c0" stroke-width="1.500" opacity=".5"/><path d="M52 37c3 .5 5 0 7 1l1 2c-3 0-6-1-8-3z" fill="#e3c6c2" opacity=".8"/></g><rect y="43.500" width="67" height="1.500" fill="#030308"/></g></svg></span>
  <span class="t" id="r0n" style="left:245.26px;top:157.25px;font-size:13px;letter-spacing:-0.328px">Test fyzické</span>
  <span class="t" id="r0r" style="left:457.0px;top:157.25px;font-size:13px;letter-spacing:-0.201px">1234567891234|6</span>
  <span class="t" id="r0c" style="left:668.0px;top:157.25px;font-size:13px;letter-spacing:-0.172px">Domů</span>
  <span class="t rt" id="r0p" style="right:611.2px;top:157.25px;font-size:13px;letter-spacing:-0.572px">3 600,00 Kč</span>
  <span class="t rt" id="r0f" style="right:488px;top:157.25px;font-size:13px;letter-spacing:-0.526px">4 456,00 Kč</span>
  <span class="t rt" id="r0q" style="right:276.5px;top:157.25px;font-size:13px;letter-spacing:-0.401px">300</span>
  <svg class="abs" style="left:1460.2px;top:160px" width="13" height="10" viewBox="0 0 13 10"><path d="M1.500 5.200l3.300 3.200 6.800-7" fill="none" stroke="#59c763" stroke-width="2.600"/></svg>
  <span class="abs btn" style="left:1560px;top:148px;width:101px;height:31px"></span>
  <svg class="abs" style="left:1568.5px;top:156.5px" width="12" height="12" viewBox="0 0 12 12" fill="#444"><path d="M0 12l.8-3.600 2.800 2.800zM1.500 7.600L7.700 1.400l2.900 2.900-6.200 6.200zM8.400.7l.5-.5c.4-.4 1-.4 1.400 0l1.500 1.500c.4.4.4 1 0 1.400l-.5.5z"/></svg>
  <span class="t" id="r0u" style="left:1584.0px;top:157.25px;font-size:13px;color:#555;letter-spacing:-0.098px">Upravit</span>
  <span class="abs caret" style="left:1641px;top:160.8px;border-top-color:#444;border-left-width:4.300px;border-right-width:4.300px;border-top-width:4.300px"></span>
  <div class="abs" style="left:20px;top:195px;width:1648px;height:62px;background:#fff;border-bottom:1px solid #eaedef"></div>
  <span class="abs cb" style="left:37.8px;top:217px"></span>
  <span class="t" id="r1id" style="left:86.5px;top:219.25px;font-size:13px;letter-spacing:-0.359px">63</span>
  <span class="abs thumb" style="left:140px;top:198px"><svg width="67" height="45" viewBox="0 0 67 45"><defs><radialGradient id="d1" cx="30" cy="19" r="9" gradientUnits="userSpaceOnUse"><stop offset="0" stop-color="#cfe2f2"/><stop offset=".5" stop-color="#8fb0c8" stop-opacity=".9"/><stop offset="1" stop-color="#5a7a90" stop-opacity="0"/></radialGradient><linearGradient id="d2" x1="0" y1="0" x2="1" y2="0"><stop offset="0" stop-color="#5d7a8e"/><stop offset=".35" stop-color="#4a6274"/><stop offset=".7" stop-color="#1c2a34"/><stop offset="1" stop-color="#0a1116"/></linearGradient><filter id="b2" x="-10%" y="-10%" width="120%" height="120%"><feGaussianBlur stdDeviation="1.200"/></filter><clipPath id="c2"><rect width="67" height="45"/></clipPath></defs><g clip-path="url(#c2)"><rect width="67" height="45" fill="#050a0c"/><g filter="url(#b2)"><path d="M15.700 18.300L26 12.500l3.800-5.800 7.700-6.700h29.500v16L51.600 19l-7 6 2 8 4 7H38l-8-7-8-7z" fill="url(#d2)"/><path d="M46 12c7-3 14-3 21-1v20c-6 1-12 1-17-1-3-4-5-10-4-18z" fill="#0e181e" opacity=".75"/><path d="M5 24c4-3 8-5 11-5 3 3 7 6 12 9 4 3 8 6 12 8H8z" fill="#23343a" opacity=".8"/><circle cx="30" cy="19" r="9" fill="url(#d1)"/><path d="M24 17l8-5 5 3-3 9-6 1z" fill="#c4d9ea" opacity=".75"/><path d="M0 30c5-2 11-2.500 16-1 6 2 11 6 16 8 8 1 20 0 35-3v11H0z" fill="#0f2413"/><path d="M8 33c5-2 11-2 15 .5 3 2 5 4 6 7-7 1-14 0-21-1z" fill="#2a5226" opacity=".85"/><path d="M36 40c8-1 18-2 28-2v4H36z" fill="#16301a" opacity=".8"/><path d="M0 0h36c-5 4-8 8-10 12-4 3-9 5-12 8-5 2-10 5-14 9z" fill="#070d0f"/></g><path d="M0 0h67v45H0z" fill="none" stroke="#020405" stroke-width="1.600"/></g></svg></span>
  <span class="t" id="r1n" style="left:245.26px;top:219.25px;font-size:13px;letter-spacing:-0.296px">příslušnství 1</span>
  <span class="t" id="r1r" style="left:457.0px;top:219.25px;font-size:13px;letter-spacing:-0.455px">55668874</span>
  <span class="t" id="r1c" style="left:668.0px;top:219.25px;font-size:13px;letter-spacing:-0.172px">Domů</span>
  <span class="t rt" id="r1p" style="right:611.2px;top:219.25px;font-size:13px;letter-spacing:-0.639px">165,29 Kč</span>
  <span class="t rt" id="r1f" style="right:488px;top:219.25px;font-size:13px;letter-spacing:-0.583px">200,00 Kč</span>
  <span class="t rt" id="r1q" style="right:276.5px;top:219.25px;font-size:13px;letter-spacing:-0.401px">300</span>
  <svg class="abs" style="left:1460.2px;top:222px" width="13" height="10" viewBox="0 0 13 10"><path d="M1.500 5.200l3.300 3.200 6.800-7" fill="none" stroke="#59c763" stroke-width="2.600"/></svg>
  <span class="abs btn" style="left:1560px;top:210px;width:101px;height:31px"></span>
  <svg class="abs" style="left:1568.5px;top:218.5px" width="12" height="12" viewBox="0 0 12 12" fill="#444"><path d="M0 12l.8-3.600 2.800 2.800zM1.500 7.600L7.700 1.400l2.900 2.900-6.200 6.200zM8.400.7l.5-.5c.4-.4 1-.4 1.400 0l1.500 1.500c.4.4.4 1 0 1.400l-.5.5z"/></svg>
  <span class="t" id="r1u" style="left:1584.0px;top:219.25px;font-size:13px;color:#555;letter-spacing:-0.098px">Upravit</span>
  <span class="abs caret" style="left:1641px;top:222.8px;border-top-color:#444;border-left-width:4.300px;border-right-width:4.300px;border-top-width:4.300px"></span>
  <div class="abs" style="left:20px;top:257px;width:1648px;height:62px;background:#fcfdfe;border-bottom:1px solid #eaedef"></div>
  <span class="abs cb" style="left:37.8px;top:279px"></span>
  <span class="t" id="r2id" style="left:86.5px;top:281.25px;font-size:13px;letter-spacing:-0.359px">65</span>
  <span class="abs thumb" style="left:140px;top:260px"><svg width="67" height="45" viewBox="0 0 67 45"><defs><linearGradient id="e1" x1="0" y1="0" x2="0" y2="1"><stop offset="0" stop-color="#dfe0ec"/><stop offset="1" stop-color="#bfc3da"/></linearGradient><filter id="b3" x="-10%" y="-10%" width="120%" height="120%"><feGaussianBlur stdDeviation=".8"/></filter><filter id="n3" x="0" y="0" width="100%" height="100%"><feTurbulence type="fractalNoise" baseFrequency=".55" numOctaves="2" seed="4" result="n"/><feColorMatrix in="n" type="matrix" values="0 0 0 0 .95  0 0 0 0 .95  0 0 0 0 .97  1.600 0 0 0 -.68"/><feComposite in2="SourceGraphic" operator="in"/></filter><clipPath id="c3"><rect width="67" height="45"/></clipPath></defs><g clip-path="url(#c3)"><rect width="67" height="45" fill="#efeff3"/><g filter="url(#b3)"><path d="M0 16c2-2 3-1 4 1 2-3 5-4 7-1 2-3 4-4 6-2 2-3 4-3 6-1 2-4 5-6 8-4 2-4 5-5 7-3 1-4 3-7 6-8 3-1 6-1 9 0 3-.5 6-.5 8 1 2-1 4 0 6 2v39H0z" fill="#666b74"/><path d="M0 16c2-2 3-1 4 1 2-3 5-4 7-1 2-3 4-4 6-2 2-3 4-3 6-1 2-4 5-6 8-4 2-4 5-5 7-3 1-4 3-7 6-8 3-1 6-1 9 0 3-.5 6-.5 8 1 2-1 4 0 6 2v39H0z" fill="#fff" filter="url(#n3)"/><path d="M40 4c2 8 1 18-1 30M50 2c1 10 1 20 0 30M58 4c1 10 2 20 1 32M30 12c0 8-1 16-2 24M18 16c0 6 0 14-1 20M8 18c0 6 1 12 0 18" stroke="#454a52" stroke-width="1.600" opacity=".55" fill="none"/><path d="M60 6c3 6 5 14 4 28M46 8c-3 8-6 16-10 22" stroke="#e8e9ee" stroke-width="2" opacity=".6" fill="none"/></g><rect y="38.500" width="67" height="6.500" fill="url(#e1)"/><path d="M0 38c10-.8 25-.5 40 0 10 .3 20 0 27-.5v2H0z" fill="#d9dbe8" filter="url(#b3)"/><g><path d="M40.300 29.900c4.700-1 9.700-1 14.400 0" stroke="#f4f4f8" stroke-width="1.400" fill="none"/><path d="M40.500 31.300h14M42.300 33.800h10.400M44.300 31.300v8M50.600 31.300v8" stroke="#c9333b" stroke-width="1.300" fill="none"/></g></g></svg></span>
  <span class="t" id="r2n" style="left:245.26px;top:281.25px;font-size:13px;letter-spacing:-0.275px">příslušnství 2</span>
  <span class="t" id="r2r" style="left:457.0px;top:281.25px;font-size:13px;letter-spacing:-0.511px">36963</span>
  <span class="t" id="r2c" style="left:668.0px;top:281.25px;font-size:13px;letter-spacing:-0.172px">Domů</span>
  <span class="t rt" id="r2p" style="right:611.2px;top:281.25px;font-size:13px;letter-spacing:-0.639px">206,61 Kč</span>
  <span class="t rt" id="r2f" style="right:488px;top:281.25px;font-size:13px;letter-spacing:-0.583px">250,00 Kč</span>
  <span class="t rt" id="r2q" style="right:276.5px;top:281.25px;font-size:13px;letter-spacing:-0.401px">100</span>
  <svg class="abs" style="left:1460.2px;top:284px" width="13" height="10" viewBox="0 0 13 10"><path d="M1.500 5.200l3.300 3.200 6.800-7" fill="none" stroke="#59c763" stroke-width="2.600"/></svg>
  <span class="abs btn" style="left:1560px;top:272px;width:101px;height:31px"></span>
  <svg class="abs" style="left:1568.5px;top:280.5px" width="12" height="12" viewBox="0 0 12 12" fill="#444"><path d="M0 12l.8-3.600 2.800 2.800zM1.500 7.600L7.700 1.400l2.900 2.900-6.200 6.200zM8.400.7l.5-.5c.4-.4 1-.4 1.400 0l1.500 1.500c.4.4.4 1 0 1.400l-.5.5z"/></svg>
  <span class="t" id="r2u" style="left:1584.0px;top:281.25px;font-size:13px;color:#555;letter-spacing:-0.098px">Upravit</span>
  <span class="abs caret" style="left:1641px;top:284.8px;border-top-color:#444;border-left-width:4.300px;border-right-width:4.300px;border-top-width:4.300px"></span>
  <span class="abs btn" style="left:20px;top:341px;width:116px;height:31px"></span>
  <span class="t" id="bulk" style="left:29.3px;top:350.25px;font-size:13px;color:#555;letter-spacing:-0.21px">hromadné akce</span>
  <span class="abs" style="left:119.3px;top:355.6px;width:0;height:0;border-left:4.100px solid transparent;border-right:4.100px solid transparent;border-bottom:4.200px solid #333"></span>
</div>

<!-- FOOTER -->
<div id="footer" class="abs">
  <svg class="abs" style="left:115px;top:12px" width="24.500" height="24" viewBox="0 0 24 24"><circle cx="12" cy="12" r="12" fill="#6fc8e8"/><path fill="#fff" d="M18.500 8.200c-.5.200-1 .4-1.500.4.500-.3 1-.8 1.200-1.500-.5.300-1.100.5-1.700.7-.5-.5-1.200-.8-1.900-.8-1.500 0-2.700 1.200-2.700 2.700 0 .2 0 .4.100.6-2.200-.1-4.200-1.200-5.500-2.800-.2.400-.4.900-.4 1.400 0 .9.500 1.700 1.200 2.200-.4 0-.9-.1-1.200-.3 0 1.300.9 2.400 2.100 2.600-.4.100-.8.100-1.200 0 .3 1.100 1.300 1.800 2.500 1.900-1.100.9-2.500 1.300-3.900 1.100 1.200.8 2.600 1.200 4.100 1.200 4.900 0 7.600-4.100 7.600-7.600v-.3c.5-.4 1-.9 1.200-1.500z"/></svg>
  <svg class="abs" style="left:146px;top:12px" width="24" height="24" viewBox="0 0 24 24"><circle cx="12" cy="12" r="12" fill="#5b7fbe"/><path fill="#fff" d="M13.200 19v-6.200h2.100l.3-2.400h-2.400V8.900c0-.7.200-1.200 1.200-1.200h1.300V5.500c-.2 0-1-.1-1.900-.1-1.900 0-3.100 1.100-3.100 3.200v1.800H8.500v2.400h2.200V19z"/></svg>
  <svg class="abs" style="left:177px;top:12px" width="24" height="24" viewBox="0 0 24 24"><circle cx="12" cy="12" r="12" fill="#fff"/><path fill="#111" d="M12 5.300c-3.800 0-6.900 3.100-6.900 6.900 0 3 2 5.600 4.700 6.500.3.100.5-.1.500-.3v-1.200c-1.900.4-2.300-.9-2.300-.9-.3-.8-.8-1-.8-1-.6-.4 0-.4 0-.4.700 0 1.100.7 1.100.7.600 1.100 1.600.8 2 .6.100-.4.200-.8.400-1-1.500-.2-3.100-.8-3.100-3.400 0-.8.300-1.400.7-1.800-.1-.2-.3-.9.100-1.800 0 0 .6-.2 1.900.7.500-.2 1.100-.2 1.700-.2s1.200.1 1.700.2c1.300-.9 1.900-.7 1.900-.7.400.9.100 1.600.1 1.800.4.500.7 1.100.7 1.800 0 2.600-1.600 3.200-3.100 3.400.2.200.5.600.5 1.300v1.900c0 .2.100.4.500.3 2.700-.9 4.700-3.500 4.700-6.500-.100-3.800-3.200-6.900-7-6.900z"/></svg>
  <svg class="abs" style="left:208px;top:12px" width="24" height="24" viewBox="0 0 24 24"><circle cx="12" cy="12" r="12" fill="#e5604e"/><text x="5" y="17.500" font-family="Liberation Serif, serif" font-size="15.500" fill="#fff">g</text><path d="M14.500 8.500h4M16.500 6.500v4" stroke="#fff" stroke-width="1.200"/></svg>
  <svg class="abs" style="left:441px;top:19px" width="13.700" height="11" viewBox="0 0 15 12" fill="#fff"><path d="M0 1.200C0 .5.500 0 1.200 0h12.600c.7 0 1.200.5 1.200 1.200v.4L7.500 6.800 0 1.600z"/><path d="M0 3.400l7.500 5.100L15 3.400v7.400c0 .7-.5 1.200-1.200 1.200H1.200C.5 12 0 11.500 0 10.800z"/></svg>
  <a class="t" id="fl1" style="left:458.41px;top:18.62px;font-size:12.5px;color:#1b9ddb;letter-spacing:0.044px">Kontakt</a>
  <span class="t" style="left:505px;top:18.2px;font-size:12.5px;color:#aaa;margin-top:.5px">/</span>
  <svg class="abs" style="left:515.5px;top:17.500px" width="13" height="13" viewBox="0 0 13 13"><path fill="#fff" d="M4.300 2.600a2.200 2.200 0 0 1 4.400 0zM3.600 3.400h5.800c.5 0 .8.300.8.800v4.600c0 2-1.600 3.400-3.700 3.400S2.800 10.800 2.800 8.800V4.200c0-.5.300-.8.800-.8z"/><path fill="none" stroke="#fff" stroke-width="1.100" d="M2.800 5.200L.8 3.400M10.200 5.200l2-1.800M2.800 7.600H.3M10.200 7.600h2.500M3 10l-2 2M10 10l2 2"/></svg>
  <a class="t" id="fl2" style="left:531.71px;top:18.62px;font-size:12.5px;color:#1b9ddb;letter-spacing:-0.163px">Sledování chyb</a>
  <span class="t" style="left:618.6px;top:18.2px;font-size:12.5px;color:#aaa;margin-top:.5px">/</span>
  <svg class="abs" style="left:628.6px;top:18.500px" width="14.500" height="12" viewBox="0 0 14.500 12" fill="#fff"><path d="M5.600 0c3.100 0 5.600 1.800 5.600 4.100S8.700 8.200 5.600 8.200c-.5 0-1-.1-1.500-.2-.8.600-1.800 1-2.900 1.100.5-.5.900-1.100 1-1.800C.900 6.600 0 5.400 0 4.100 0 1.800 2.500 0 5.600 0z"/><path d="M12.400 4.600c1.300.7 2.100 1.800 2.100 3 0 1.300-.9 2.400-2.200 3.100.1.700.5 1.300 1 1.800-1.100-.1-2.100-.5-2.900-1.100-.5.100-1 .2-1.500.2-1.600 0-3-.5-4-1.300 4 .3 7.500-2 7.500-5.700z"/></svg>
  <a class="t" id="fl3" style="left:646.61px;top:18.62px;font-size:12.5px;color:#1b9ddb;letter-spacing:-0.143px">Forum</a>
  <span class="t" style="left:686.4px;top:18.2px;font-size:12.5px;color:#aaa;margin-top:.5px">/</span>
  <svg class="abs" style="left:695.8px;top:17.500px" width="13.600" height="12.700" viewBox="0 0 15 14"><path fill="#fff" d="M0 4.800h3.800C3.300 4.100 3 3.500 3 2.700 3 1.500 3.900.6 5.100.6S7.200 1.500 7.200 2.700c0 .8-.3 1.400-.8 2.100h4v3.500c.5-.5 1.100-.9 1.900-.9 1.100 0 2 .9 2 2s-.9 2-2 2c-.8 0-1.400-.4-1.900-.9V14H6.600v-1.800c0-1-.6-1.400-1.400-1.400s-1.400.4-1.400 1.400V14H0z"/></svg>
  <a class="t" id="fl4" style="left:712.91px;top:18.62px;font-size:12.5px;color:#1b9ddb;letter-spacing:0.018px">Doplňky</a>
  <span class="t" style="left:762.5px;top:18.2px;font-size:12.5px;color:#aaa;margin-top:.5px">/</span>
  <svg class="abs" style="left:772.4px;top:18.500px" width="13.200" height="11.500" viewBox="0 0 15 13"><path fill="#fff" fill-rule="evenodd" d="M4.800.3h9c.7 0 1.100.6.900 1.300l-2.400 8.600c-.2.700-.8 1.200-1.500 1.200H3.200l-.3 1h8.400l-.3.500H1.700c-.8 0-1.300-.7-1.100-1.500L3 2.200C3.300 1.100 4 .3 4.800.3zM5.600 3l-.25.900h6l.25-.9zM5 5.200l-.25.900h6l.25-.9z"/></svg>
  <a class="t" id="fl5" style="left:788.8px;top:18.62px;font-size:12.5px;color:#1b9ddb;letter-spacing:-0.438px">Výcvik</a>
</div>
<svg class="abs" style="left:1856px;top:339px" width="14" height="20" viewBox="0 0 14 20"><path d="M1.600 1.700v13.200l3.100-2.900 2.300 5.200 1.900-.85-2.300-5h4.300z" fill="#000" stroke="#fff" stroke-width="1.100" stroke-linejoin="round"/></svg>
<div id="botstrip" class="abs"><span class="abs" style="left:1749px;top:0;width:42px;height:3px;background:#8fb4e3"></span><span class="abs" style="left:1791px;top:0;width:129px;height:3px;background:#0b0b0d"></span></div>
</body>
</html>
